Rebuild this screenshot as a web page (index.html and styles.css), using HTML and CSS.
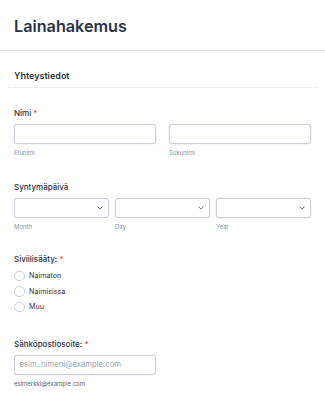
FILE: index.html
```html
<!DOCTYPE html>
<html lang="fi">
<head>
<meta charset="utf-8">
<link rel="stylesheet" href="styles.css">
</head>
<body>
<header class="head"><h1 class="title">Lainahakemus</h1></header>
<main class="form">
  <h2 class="section">Yhteystiedot</h2>

  <div class="field f-name">
    <div class="label">Nimi <span class="req">*</span></div>
    <div class="row two">
      <div class="col"><div class="input"></div><div class="sub">Etunimi</div></div>
      <div class="col"><div class="input"></div><div class="sub">Sukunimi</div></div>
    </div>
  </div>

  <div class="field f-date">
    <div class="label">Syntymäpäivä</div>
    <div class="row three">
      <div class="col"><div class="input select"><svg viewBox="0 0 8 5" class="chev"><path d="M1 1l3 3 3-3" fill="none" stroke="#5a6270" stroke-width="1.2" stroke-linecap="round" stroke-linejoin="round"/></svg></div><div class="sub">Month</div></div>
      <div class="col"><div class="input select"><svg viewBox="0 0 8 5" class="chev"><path d="M1 1l3 3 3-3" fill="none" stroke="#5a6270" stroke-width="1.2" stroke-linecap="round" stroke-linejoin="round"/></svg></div><div class="sub">Day</div></div>
      <div class="col"><div class="input select"><svg viewBox="0 0 8 5" class="chev"><path d="M1 1l3 3 3-3" fill="none" stroke="#5a6270" stroke-width="1.2" stroke-linecap="round" stroke-linejoin="round"/></svg></div><div class="sub">Year</div></div>
    </div>
  </div>

  <div class="field f-radio">
    <div class="label">Siviilisääty: <span class="req">*</span></div>
    <div class="radios">
      <div class="radio"><span class="circle"></span>Naimaton</div>
      <div class="radio"><span class="circle"></span>Naimisissa</div>
      <div class="radio"><span class="circle"></span>Muu</div>
    </div>
  </div>

  <div class="field f-email">
    <div class="label">Sähköpostiosoite: <span class="req">*</span></div>
    <div class="input email"><span class="ph">esim. nimeni@example.com</span></div>
    <div class="sub dark">esimerkki@example.com</div>
  </div>
</main>
</body>
</html>
```

FILE: styles.css
```css
* { box-sizing: border-box; margin: 0; padding: 0; }
html, body { background: #fff; }
body {
  font-family: Inter, "Noto Sans", sans-serif;
  color: #2c3345;
  width: 325px;
  overflow: hidden;
}
.head {
  height: 51px;
  border-bottom: 1px solid #e3e5ea;
  padding: 16px 14px 0;
}
.title {
  font-size: 16.2px;
  font-weight: 600;
  line-height: 20px;
}
.form { padding: 0 7px 0 8px; }
.section {
  font-size: 9px;
  font-weight: 600;
  line-height: 12px;
  padding: 18.5px 6px 5.5px;
  border-bottom: 1px dotted #e3e5ea;
}
.field { padding: 0 7px 0 6px; }
.f-name { padding-top: 20px; }
.f-date { padding-top: 25px; }
.f-radio { padding-top: 23px; }
.f-email { padding-top: 26px; }
.label {
  font-size: 8px;
  font-weight: 500;
  line-height: 10px;
  margin-bottom: 6px;
}
.req { color: #f23a3c; }
.row { display: flex; }
.two { gap: 13px; }
.three { gap: 6px; }
.col { flex: 1; }
.input {
  height: 19.5px;
  border: 1px solid #cdd0d9;
  border-radius: 3px;
  background: #fff;
  box-shadow: 0 0 0 0.5px #eceef2;
}
.select {
  display: flex;
  align-items: center;
  justify-content: flex-end;
  padding-right: 5px;
}
.chev { width: 6px; height: 4px; }
.sub {
  font-size: 6px;
  color: #8d93a0;
  line-height: 8px;
  margin-top: 5.5px;
}
.sub.dark { color: #5c6270; }
.radios { display: flex; flex-direction: column; gap: 3.5px; margin-top: 6px; }
.radio {
  display: flex;
  align-items: center;
  font-size: 7.2px;
  line-height: 12px;
  color: #2c3345;
}
.circle {
  width: 10.5px;
  height: 10.5px;
  border: 1px solid #cdd0d9;
  border-radius: 50%;
  margin-right: 4.5px;
}
.email { width: 141.5px; display: flex; align-items: center; padding-left: 4.5px; }
.ph { font-size: 7.7px; color: #a0a5b0; }
```
